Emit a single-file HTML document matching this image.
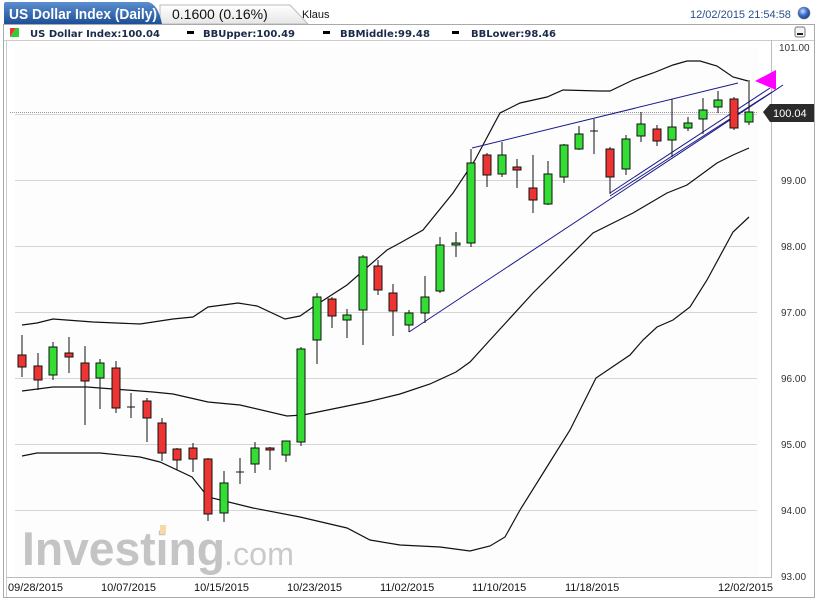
<!DOCTYPE html>
<html><head><meta charset="utf-8">
<style>
html,body{margin:0;padding:0;background:#fff;width:821px;height:601px;overflow:hidden;font-family:"Liberation Sans",sans-serif}
</style></head><body>
<svg width="821" height="601" viewBox="0 0 821 601" xmlns="http://www.w3.org/2000/svg" style="position:absolute;left:0;top:0">
<defs>
<linearGradient id="tab" x1="0" y1="0" x2="0" y2="1"><stop offset="0" stop-color="#5b8fd0"/><stop offset="1" stop-color="#1d4f96"/></linearGradient>
<linearGradient id="tab2" x1="0" y1="0" x2="0" y2="1"><stop offset="0" stop-color="#ffffff"/><stop offset="1" stop-color="#e6e6e6"/></linearGradient>
<radialGradient id="ball" cx="0.4" cy="0.35" r="0.7"><stop offset="0" stop-color="#cfe0ff"/><stop offset="0.5" stop-color="#3c6fd0"/><stop offset="1" stop-color="#1a3a80"/></radialGradient>
</defs>
<path d="M160,5 L290,5 L308,24 L160,24 Z" fill="url(#tab2)" stroke="#bbb"/>
<path d="M4,24 L4,4 Q4,2 6,2 L148,2 Q158,4 162,24 Z" fill="url(#tab)"/>
<text x="9" y="19" font-size="15" font-weight="bold" fill="#fff" textLength="148" lengthAdjust="spacingAndGlyphs">US Dollar Index (Daily)</text>
<text x="172" y="19" font-size="14" fill="#111">0.1600 (0.16%)</text>
<text x="302" y="18" font-size="11" fill="#111">Klaus</text>
<text x="690" y="18" font-size="11" fill="#2a4f8c">12/02/2015 21:54:58</text>
<circle cx="804" cy="13" r="6" fill="url(#ball)" stroke="#778" stroke-width="0.6"/>
<rect x="3.5" y="24.5" width="811" height="573" fill="#fff" stroke="#aaa"/>
<line x1="6.5" y1="40" x2="6.5" y2="597" stroke="#ccc"/>
<line x1="4" y1="40.5" x2="814" y2="40.5" stroke="#ccc"/>
<path d="M10,28 L16,28 L10,37 Z" fill="#e33"/><path d="M16,28 L19,28 L19,37 L10,37 Z" fill="#3c3"/>
<g font-weight="bold" fill="#1a2a4a" font-family="DejaVu Sans,sans-serif" style="font-size:10px">
<text x="30" y="37" textLength="130" lengthAdjust="spacingAndGlyphs">US Dollar Index:100.04</text>
<rect x="187" y="31" width="7" height="3" fill="#000"/><text x="203" y="37" textLength="92" lengthAdjust="spacingAndGlyphs">BBUpper:100.49</text>
<rect x="323" y="31" width="7" height="3" fill="#000"/><text x="340" y="37" textLength="90" lengthAdjust="spacingAndGlyphs">BBMiddle:99.48</text>
<rect x="452" y="31" width="7" height="3" fill="#000"/><text x="471" y="37" textLength="85" lengthAdjust="spacingAndGlyphs">BBLower:98.46</text>
</g>
<rect x="795" y="27" width="10" height="10" rx="2" fill="#f4f4f4" stroke="#777"/><rect x="797" y="33" width="6" height="2" fill="#222"/>
<rect x="15" y="47" width="743" height="530" fill="#fdfdfd"/>
<line x1="771.5" y1="40" x2="771.5" y2="578" stroke="#bbb"/>
<line x1="7" y1="577.5" x2="772" y2="577.5" stroke="#bbb"/>
<g stroke="#d6d6d6" stroke-width="1">
<line x1="15" y1="114.5" x2="757" y2="114.5"/><line x1="15" y1="180.5" x2="757" y2="180.5"/><line x1="15" y1="246.5" x2="757" y2="246.5"/><line x1="15" y1="312.5" x2="757" y2="312.5"/><line x1="15" y1="378.5" x2="757" y2="378.5"/><line x1="15" y1="444.5" x2="757" y2="444.5"/><line x1="15" y1="510.5" x2="757" y2="510.5"/>
</g>
<line x1="10" y1="112.5" x2="757" y2="112.5" stroke="#999" stroke-dasharray="1,1"/>
<g fill="#333" font-family="Liberation Sans,sans-serif" style="font-size:10px">
<text x="779" y="51">101.00</text><text x="781" y="184">99.00</text><text x="781" y="250">98.00</text><text x="781" y="316">97.00</text><text x="781" y="382">96.00</text><text x="781" y="448">95.00</text><text x="781" y="514">94.00</text><text x="781" y="580">93.00</text>
</g>
<g font-size="11" fill="#111"><text x="8" y="591">09/28/2015</text><text x="101" y="591">10/07/2015</text><text x="194" y="591">10/15/2015</text><text x="287" y="591">10/23/2015</text><text x="380" y="591">11/02/2015</text><text x="472" y="591">11/10/2015</text><text x="565" y="591">11/18/2015</text><text x="718" y="591">12/02/2015</text></g>
<text x="22" y="565" font-size="47" font-weight="bold" fill="#c4c4c4" textLength="203" lengthAdjust="spacingAndGlyphs">Investing</text>
<text x="224" y="565" font-size="32" fill="#cacaca" textLength="70" lengthAdjust="spacingAndGlyphs">.com</text>
<rect x="160" y="525" width="6" height="9" fill="#f5d9a8"/>
<g fill="none" stroke="#111" stroke-width="1.2">
<polyline points="22,325 37,323 53,319 93,322 140,324 173,319 193,317 208,307 238,303 257,306 285,319 300,316 313,307 347,285 387,250 400,243 423,230 453,193 475,160 500,113 520,103 547,97 563,90 600,91 610,91 633,80 653,73 673,65 687,61 700,61 717,66 733,77 748,81"/>
<polyline points="22,391 53,387 87,387 153,392 173,394 208,402 240,405 287,416 303,415 367,402 400,394 430,384 456,372 470,362 490,340 533,293 593,233 633,213 667,193 687,185 717,163 733,155 749,148"/>
<polyline points="22,456 37,453 100,453 140,457 160,462 192,477 208,497 253,508 300,517 347,528 370,540 400,545 440,547 470,551 490,546 505,537 520,510 545,470 570,430 596,378 630,355 643,340 657,327 673,320 690,307 707,280 733,232 749,217"/>
</g>
<g stroke="#1a1a8a" stroke-width="1" fill="none">
<line x1="472" y1="148" x2="738" y2="83"/>
<line x1="409" y1="332" x2="783" y2="85"/>
<line x1="610" y1="193" x2="770" y2="88"/>
<line x1="610" y1="196" x2="772" y2="92"/>
</g>
<polygon points="755,81 776,70 776,90" fill="#f0f"/>
<g stroke="#111" stroke-width="1">
<line x1="22" y1="335" x2="22" y2="377"/><rect x="18" y="355" width="8" height="12" fill="#e33"/>
<line x1="38" y1="353" x2="38" y2="390"/><rect x="34" y="366" width="8" height="14" fill="#e33"/>
<line x1="53" y1="342" x2="53" y2="380"/><rect x="49" y="347" width="8" height="28" fill="#3d3"/>
<line x1="69" y1="337" x2="69" y2="373"/><rect x="65" y="353" width="8" height="4" fill="#e33"/>
<line x1="85" y1="346" x2="85" y2="425"/><rect x="81" y="363" width="8" height="18" fill="#e33"/>
<line x1="100" y1="359" x2="100" y2="409"/><rect x="96" y="363" width="8" height="15" fill="#3d3"/>
<line x1="116" y1="361" x2="116" y2="413"/><rect x="112" y="368" width="8" height="40" fill="#e33"/>
<line x1="131" y1="393" x2="131" y2="418"/><line x1="127" y1="407" x2="135" y2="407"/>
<line x1="147" y1="398" x2="147" y2="442"/><rect x="143" y="401" width="8" height="17" fill="#e33"/>
<line x1="162" y1="418" x2="162" y2="461"/><rect x="158" y="423" width="8" height="30" fill="#e33"/>
<line x1="177" y1="448" x2="177" y2="470"/><rect x="173" y="449" width="8" height="11" fill="#e33"/>
<line x1="193" y1="443" x2="193" y2="472"/><rect x="189" y="448" width="8" height="11" fill="#e33"/>
<line x1="208" y1="458" x2="208" y2="521"/><rect x="204" y="459" width="8" height="55" fill="#e33"/>
<line x1="224" y1="471" x2="224" y2="522"/><rect x="220" y="483" width="8" height="30" fill="#3d3"/>
<line x1="240" y1="458" x2="240" y2="484"/><line x1="236" y1="472" x2="244" y2="472"/>
<line x1="255" y1="442" x2="255" y2="473"/><rect x="251" y="448" width="8" height="16" fill="#3d3"/>
<line x1="270" y1="447" x2="270" y2="470"/><rect x="266" y="448" width="8" height="2" fill="#e33"/>
<line x1="286" y1="441" x2="286" y2="462"/><rect x="282" y="441" width="8" height="14" fill="#3d3"/>
<line x1="301" y1="347" x2="301" y2="446"/><rect x="297" y="349" width="8" height="93" fill="#3d3"/>
<line x1="317" y1="293" x2="317" y2="364"/><rect x="313" y="297" width="8" height="43" fill="#3d3"/>
<line x1="332" y1="297" x2="332" y2="328"/><rect x="328" y="299" width="8" height="17" fill="#e33"/>
<line x1="347" y1="309" x2="347" y2="338"/><rect x="343" y="315" width="8" height="5" fill="#3d3"/>
<line x1="363" y1="255" x2="363" y2="345"/><rect x="359" y="257" width="8" height="53" fill="#3d3"/>
<line x1="378" y1="260" x2="378" y2="295"/><rect x="374" y="266" width="8" height="24" fill="#e33"/>
<line x1="393" y1="284" x2="393" y2="336"/><rect x="389" y="293" width="8" height="18" fill="#e33"/>
<line x1="409" y1="310" x2="409" y2="332"/><rect x="405" y="313" width="8" height="12" fill="#3d3"/>
<line x1="425" y1="276" x2="425" y2="323"/><rect x="421" y="297" width="8" height="16" fill="#3d3"/>
<line x1="440" y1="237" x2="440" y2="293"/><rect x="436" y="245" width="8" height="46" fill="#3d3"/>
<line x1="456" y1="232" x2="456" y2="257"/><rect x="452" y="243" width="8" height="2" fill="#3d3"/>
<line x1="471" y1="149" x2="471" y2="247"/><rect x="467" y="163" width="8" height="80" fill="#3d3"/>
<line x1="487" y1="153" x2="487" y2="187"/><rect x="483" y="155" width="8" height="20" fill="#e33"/>
<line x1="502" y1="142" x2="502" y2="177"/><rect x="498" y="155" width="8" height="19" fill="#3d3"/>
<line x1="517" y1="159" x2="517" y2="188"/><rect x="513" y="167" width="8" height="3" fill="#e33"/>
<line x1="533" y1="155" x2="533" y2="213"/><rect x="529" y="188" width="8" height="12" fill="#e33"/>
<line x1="548" y1="161" x2="548" y2="205"/><rect x="544" y="174" width="8" height="30" fill="#3d3"/>
<line x1="564" y1="144" x2="564" y2="183"/><rect x="560" y="145" width="8" height="32" fill="#3d3"/>
<line x1="579" y1="126" x2="579" y2="150"/><rect x="575" y="134" width="8" height="15" fill="#3d3"/>
<line x1="594" y1="119" x2="594" y2="154"/><line x1="590" y1="131" x2="598" y2="131"/>
<line x1="610" y1="147" x2="610" y2="194"/><rect x="606" y="149" width="8" height="28" fill="#e33"/>
<line x1="626" y1="135" x2="626" y2="175"/><rect x="622" y="139" width="8" height="30" fill="#3d3"/>
<line x1="641" y1="112" x2="641" y2="142"/><rect x="637" y="124" width="8" height="12" fill="#3d3"/>
<line x1="657" y1="125" x2="657" y2="146"/><rect x="653" y="129" width="8" height="12" fill="#e33"/>
<line x1="672" y1="99" x2="672" y2="157"/><rect x="668" y="127" width="8" height="13" fill="#3d3"/>
<line x1="688" y1="117" x2="688" y2="131"/><rect x="684" y="123" width="8" height="5" fill="#3d3"/>
<line x1="703" y1="98" x2="703" y2="134"/><rect x="699" y="110" width="8" height="9" fill="#3d3"/>
<line x1="718" y1="91" x2="718" y2="113"/><rect x="714" y="100" width="8" height="7" fill="#3d3"/>
<line x1="734" y1="97" x2="734" y2="130"/><rect x="730" y="99" width="8" height="29" fill="#e33"/>
<line x1="749" y1="80" x2="749" y2="125"/><rect x="745" y="112" width="8" height="10" fill="#3d3"/>
</g>
<path d="M763,112 L770,104 L814,104 L814,122 L770,122 Z" fill="#2b2b2b"/>
<text x="773" y="117" font-size="11" fill="#fff">100.04</text>
</svg>
</body></html>
